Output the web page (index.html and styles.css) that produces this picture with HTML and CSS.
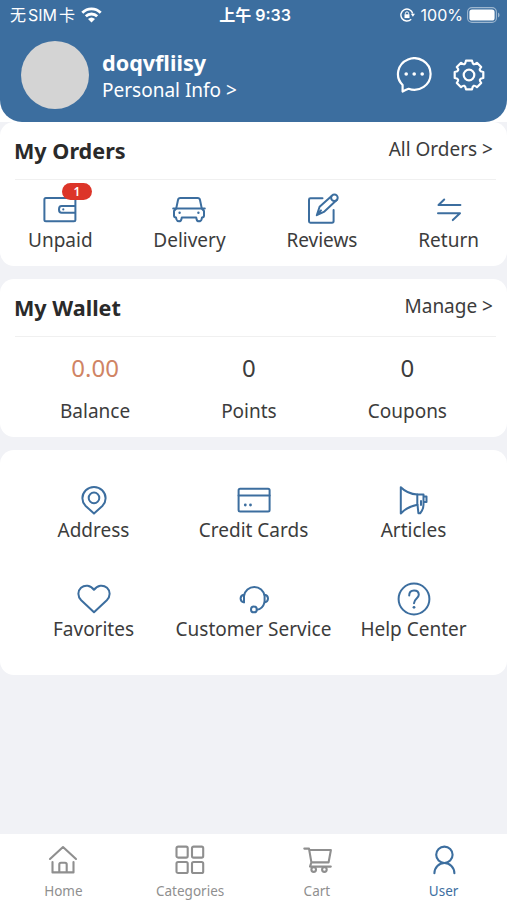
FILE: index.html
```html
<!DOCTYPE html>
<html lang="en">
<head>
  <meta charset="UTF-8" />
  <meta name="viewport" content="width=device-width, initial-scale=1" />
  <title>User</title>
  <link rel="stylesheet" href="styles.css">
</head>
<body>
  <div class="top">
    <header class="header">
      <div class="status">
        <div class="status-left">
          <span>无 SIM 卡</span>
          <svg width="21" height="16" viewBox="0 0 21 16" fill="none" stroke="#fff" stroke-width="2.8">
            <path d="M1.3 5.7C6.5 .6 14.5 .6 19.7 5.7"/>
            <path d="M4.8 9.3C8 6.2 13 6.2 16.2 9.3"/>
            <path d="M10.5 15.5L7 12Q10.5 9 14 12Z" fill="#fff" stroke="none"/>
          </svg>
        </div>
        <div class="status-time">上午 9:33</div>
        <div class="status-right">
          <svg width="15" height="14" viewBox="0 0 15 14" fill="none" stroke="#fff" stroke-width="1.4">
            <path d="M12.7 5.5A6 6 0 1 0 11.2 11.2"/>
            <path d="M10.8 5.8H15L12.9 8.8Z" fill="#fff" stroke="none"/>
            <rect x="4.5" y="6.3" width="5" height="3.8" fill="#fff" stroke="none"/>
            <path d="M5.4 6.5V5.4a1.6 1.6 0 0 1 3.2 0V6.5" stroke-width="1"/>
          </svg>
          <span class="percent">100%</span>
          <svg width="33" height="16" viewBox="0 0 33 16">
            <rect x=".6" y=".6" width="28.8" height="14.8" rx="4.4" fill="none" stroke="#fff" stroke-opacity=".5" stroke-width="1.1"/>
            <rect x="2.4" y="2.4" width="25.2" height="11.2" rx="2.6" fill="#fff"/>
            <path d="M31 5.5Q32.6 6.4 32.6 8T31 10.5Z" fill="#fff" fill-opacity=".5"/>
          </svg>
        </div>
      </div>
      <div class="profile">
        <div class="avatar"></div>
        <div class="profile-text">
          <div class="name">doqvfliisy</div>
          <div class="info">Personal Info &gt;</div>
        </div>
        <svg class="head-icon" width="36" height="36" viewBox="0 0 36 36">
          <path d="M6.6 34.5V28A16.3 15.8 0 1 1 12.6 31.8Q9.5 32.8 6.6 34.5Z"/>
          <g class="dots"><circle cx="10.2" cy="17" r="1.8"/><circle cx="18.2" cy="17" r="1.8"/><circle cx="26.2" cy="17" r="1.8"/></g>
        </svg>
        <svg class="head-icon gear" width="36" height="36" viewBox="0 0 36 36">
          <circle cx="18" cy="18" r="5.3"/>
          <path d="M15 3.7H21C21.6 7.6 23.2 8.2 25.95 5.8L30.2 10.05C27.8 12.8 28.4 14.4 32.3 15V21C28.4 21.6 27.8 23.2 30.2 25.95L25.95 30.2C23.2 27.8 21.6 28.4 21 32.3H15C14.4 28.4 12.8 27.8 10.05 30.2L5.8 25.95C8.2 23.2 7.6 21.6 3.7 21V15C7.6 14.4 8.2 12.8 5.8 10.05L10.05 5.8C12.8 8.2 14.4 7.6 15 3.7Z"/>
        </svg>
      </div>
    </header>
  </div>

  <main>
    <section class="card">
      <div class="card-head">
        <h2>My Orders</h2>
        <span class="more">All Orders &gt;</span>
      </div>
      <div class="orders">
        <div class="item">
          <svg class="icon" viewBox="0 0 36 36">
            <rect x="2.4" y="7.1" width="31" height="23.2" rx="1.5"/>
            <path d="M33 15.1H19.6Q17 15.1 17 18.4T19.6 21.7H33"/>
            <circle class="dot" cx="21.3" cy="18.4" r="1.1"/>
          </svg>
          <span class="badge">1</span>
          <span>Unpaid</span>
        </div>
        <div class="item">
          <svg class="icon" viewBox="0 0 36 36">
            <path d="M5.2 17.6L7 9Q7.4 7 9.2 7H26.8Q28.6 7 29 9L30.8 17.6"/>
            <path d="M5.2 17.6H30.8L33 20V24.5Q33 26.4 31 26.6L30.6 28.2Q30 30.3 28 30.3T25.6 28.2L25.2 26.4H10.8L10.4 28.2Q9.9 30.3 8 30.3T5.4 28.2L5 26.6Q3 26.4 3 24.5V20ZM2.2 17.6H5M31 17.6H33.8"/>
            <circle class="dot" cx="8.6" cy="21.7" r="1.2"/><circle class="dot" cx="27.4" cy="21.7" r="1.2"/>
          </svg>
          <span>Delivery</span>
        </div>
        <div class="item">
          <svg class="icon" viewBox="0 0 36 36">
            <path d="M18.5 7.3H6.4Q5 7.3 5 8.7V30.3Q5 31.7 6.4 31.7H28Q29.6 31.7 29.6 30.3V19.1"/>
            <path d="M27.6 5L15.6 15.8L12.8 24.2L20.4 20.6L33 8.8M12.8 24.2L17 19.4"/>
            <circle cx="30.4" cy="6.7" r="3.3"/>
          </svg>
          <span>Reviews</span>
        </div>
        <div class="item">
          <svg class="icon" viewBox="0 0 36 36">
            <path d="M13.2 8.5L7.5 14H29.4M7 22.3H29L21.8 29.1"/>
          </svg>
          <span>Return</span>
        </div>
      </div>
    </section>

    <section class="card">
      <div class="card-head">
        <h2>My Wallet</h2>
        <span class="more">Manage &gt;</span>
      </div>
      <div class="wallet">
        <div class="amount"><b class="money">0.00</b><span>Balance</span></div>
        <div class="amount"><b>0</b><span>Points</span></div>
        <div class="amount"><b>0</b><span>Coupons</span></div>
      </div>
    </section>

    <section class="card services">
      <div class="item">
        <svg class="icon" viewBox="0 0 36 36">
          <path d="M18 31.6L9.4 23.7Q6.4 20.4 6.4 16.3A11.6 11.4 0 0 1 29.6 16.3Q29.6 20.4 26.6 23.7Z"/>
          <circle cx="18" cy="15.9" r="5.3"/>
        </svg>
        <span>Address</span>
      </div>
      <div class="item">
        <svg class="icon" viewBox="0 0 36 36">
          <rect x="2.6" y="6.7" width="31" height="22.8" rx="1.5"/>
          <path d="M2.6 13.6H33.6"/>
          <g class="dot"><circle cx="9.3" cy="23" r="1.4"/><circle cx="14.5" cy="23" r="1.4"/></g>
        </svg>
        <span>Credit Cards</span>
      </div>
      <div class="item">
        <svg class="icon" viewBox="0 0 36 36">
          <path d="M4.8 5.3V31.5Q11.5 24.5 21.3 22.7V12.6Q11.5 12 4.8 5.3Z"/>
          <path d="M21.3 12.4H27.5V22.7M27.5 14.4H30.5V20H27.5M21.5 22.7L22.4 31.2H24.2Q27.2 28 27.5 22.7M25 19V23"/>
        </svg>
        <span>Articles</span>
      </div>
      <div class="item">
        <svg class="icon" viewBox="0 0 36 36">
          <path d="M18 31.3L5.2 19.2C1.4 15.4 1.5 10 5 6.8C9 3.4 14.6 4.2 18 8.8C21.4 4.2 27 3.4 31 6.8C34.5 10 34.6 15.4 30.8 19.2Z"/>
        </svg>
        <span>Favorites</span>
      </div>
      <div class="item">
        <svg class="icon" viewBox="0 0 36 36">
          <path d="M8 21.3V15A10.4 10.4 0 0 1 28.6 15V21.3Q26.5 28.5 20.8 28.8"/>
          <path d="M8 13.7Q4.6 14.2 4.6 17.5T8 21.3M28.6 13.7Q32 14.2 32 17.5T28.6 21.3"/>
          <circle cx="17.9" cy="28.4" r="2.9"/>
        </svg>
        <span>Customer Service</span>
      </div>
      <div class="item">
        <svg class="icon" viewBox="0 0 36 36">
          <circle cx="18" cy="18" r="15.4"/>
          <path d="M13.2 14.6Q13.2 9.4 18 9.4T22.8 13.8C22.8 17.4 18 17.6 18 22.2"/>
          <circle class="dot" cx="18" cy="26.3" r="1.4"/>
        </svg>
        <span>Help Center</span>
      </div>
    </section>
  </main>

  <nav class="tabbar">
    <div class="tab">
      <svg class="tab-icon" viewBox="0 0 32 32">
        <path d="M3 15L16 3L29 15M5.5 18V28.4H26.5V18M12.3 28V20.5Q12.3 18.7 14 18.7H18Q19.7 18.7 19.7 20.5V28"/>
      </svg>
      <span>Home</span>
    </div>
    <div class="tab">
      <svg class="tab-icon" viewBox="0 0 32 32">
        <rect x="2.5" y="2.6" width="11.2" height="11" rx="1.6"/><rect x="18" y="2.6" width="11.2" height="11" rx="1.6"/>
        <rect x="2.5" y="18" width="11.2" height="11" rx="1.6"/><rect x="18" y="18" width="11.2" height="11" rx="1.6"/>
      </svg>
      <span>Categories</span>
    </div>
    <div class="tab">
      <svg class="tab-icon" viewBox="0 0 32 32">
        <path d="M3.3 4.6H8L10.4 18.4H27.6L29.9 6H8.4M10.4 18.4L9 22.6H29.8"/>
        <circle cx="12.7" cy="25.6" r="2.3"/><circle cx="23.4" cy="25.6" r="2.3"/>
      </svg>
      <span>Cart</span>
    </div>
    <div class="tab active">
      <svg class="tab-icon" viewBox="0 0 32 32">
        <circle cx="16.4" cy="10.8" r="8.2"/>
        <path d="M6.4 29.3C6.4 23.4 11 19 16.4 19S26.4 23.4 26.4 29.3"/>
      </svg>
      <span>User</span>
    </div>
  </nav>
</body>
</html>
```
FILE: styles.css
```css
:root {
  --blue: #3c6e9f;
  --bg: #f1f2f6;
  --text: #3c3c3c;
  --grey: #8f8f8f;
}
* { box-sizing: border-box; margin: 0; padding: 0; }
body {
  font-family: "Noto Sans", "Noto Sans CJK SC", sans-serif;
  font-size: 19px;
  background: var(--bg);
  color: var(--text);
  height: 100vh;
  display: flex;
  flex-direction: column;
  overflow: hidden;
}
svg { display: block; flex: none; }

.top { background: #fff; }
.header {
  height: 122px;
  background: var(--blue);
  border-radius: 0 0 22px 22px;
  color: #fff;
}
.status {
  display: grid;
  grid-template-columns: 1fr auto 1fr;
  align-items: center;
  height: 30px;
  padding: 0 7px 0 10px;
  font-family: Inter, "Noto Sans CJK SC", sans-serif;
  font-size: 16px;
  line-height: 30px;
}
.status-left, .status-right { display: flex; align-items: center; }
.status-left { gap: 6px; word-spacing: -2.5px; }
.status-right { justify-content: flex-end; gap: 4px; }
.status-time { font-weight: 600; }
.percent { margin-left: 2px; }
.profile {
  display: flex;
  align-items: center;
  height: 90px;
  padding: 0 20px 0 21px;
}
.avatar {
  width: 68px;
  height: 68px;
  border-radius: 50%;
  background: #d4d4d4;
}
.profile-text { flex: 1; margin-left: 13px; padding-top: 5px; }
.name { font-size: 21.6px; font-weight: 700; line-height: 26px; }
.info { line-height: 29px; }
.head-icon {
  fill: none;
  stroke: #fff;
  stroke-width: 2.2;
  stroke-linejoin: round;
}
.head-icon .dots { fill: #fff; stroke: none; }
.gear { margin-left: 19px; }

.card {
  background: #fff;
  border-radius: 14px;
  margin-bottom: 13px;
}
.card-head {
  display: flex;
  justify-content: space-between;
  height: 58px;
  margin-left: 15px;
  margin-right: 11px;
  padding-right: 3px;
  border-bottom: 1px solid #f0f0f0;
}
h2 { margin-left: -1px; font-size: 21.6px; font-weight: 700; line-height: 58px; color: #2a2a2a; }
.more { line-height: 55px; }

.orders {
  display: flex;
  justify-content: space-between;
  padding: 11px 28px 13px;
}
.item {
  position: relative;
  display: flex;
  flex-direction: column;
  align-items: center;
  line-height: 26px;
  white-space: nowrap;
}
.icon {
  width: 36px;
  height: 36px;
  fill: none;
  stroke: var(--blue);
  stroke-width: 2;
  stroke-linecap: round;
  stroke-linejoin: round;
}
.dot { fill: var(--blue); stroke: none; }
.badge {
  position: absolute;
  left: 34px;
  top: -8px;
  width: 30px;
  height: 17px;
  border-radius: 9px;
  background: #dc3529;
  color: #fff;
  font-size: 12px;
  font-weight: 600;
  line-height: 17px;
  text-align: center;
}

.wallet {
  display: flex;
  justify-content: space-between;
  padding: 16px 60px 11px;
}
.amount {
  display: flex;
  flex-direction: column;
  align-items: center;
  gap: 13px;
  line-height: 30px;
}
.amount b { font-size: 24px; font-weight: 400; }
.amount .money { color: #d08464; }

.services {
  display: grid;
  grid-template-columns: repeat(3, 160px);
  justify-content: center;
  row-gap: 38px;
  padding: 32px 0 33px;
}
.services .icon { margin-bottom: -1px; }

.tabbar {
  display: flex;
  height: 66px;
  margin-top: auto;
  background: #fff;
}
.tab {
  flex: 1;
  display: flex;
  flex-direction: column;
  align-items: center;
  padding-top: 10px;
  font-size: 13.5px;
  line-height: 30px;
  color: var(--grey);
}
.tab-icon {
  width: 32px;
  height: 32px;
  fill: none;
  stroke: var(--grey);
  stroke-width: 2.1;
  stroke-linecap: round;
  stroke-linejoin: round;
}
.active { color: var(--blue); }
.active .tab-icon { stroke: var(--blue); }
```
